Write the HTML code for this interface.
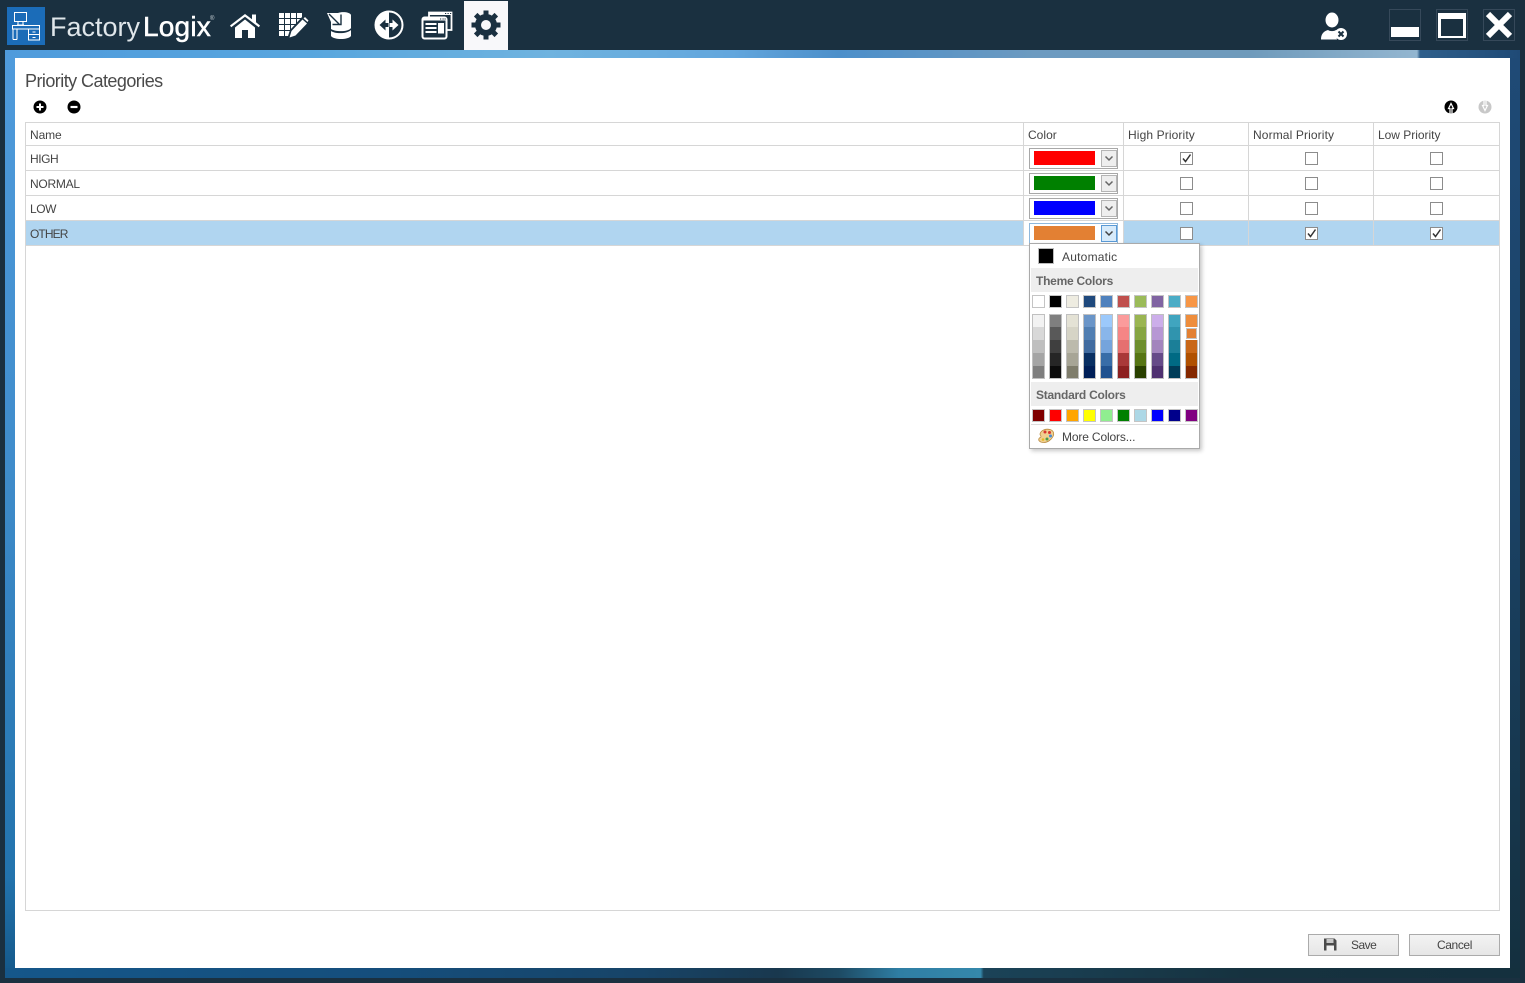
<!DOCTYPE html>
<html>
<head>
<meta charset="utf-8">
<title>Priority Categories</title>
<style>
html,body{margin:0;padding:0;background:#1a3040}
body{width:1525px;height:983px;position:relative;overflow:hidden;font-family:"Liberation Sans",sans-serif;color:#444}
div,span,svg{position:absolute}
.t{font-size:12px;line-height:16px;white-space:nowrap;letter-spacing:-.1px}
.u{letter-spacing:-.45px}
.h{letter-spacing:.12px}
.line{background:#d6d6d6}
.combo{left:1029px;width:87px;height:19px;border:1px solid #a8a8a8;background:#fff}
.sw{left:4px;top:2px;width:61px;height:14px}
.arr{left:71px;top:1px;width:14px;height:15px;border:1px solid #b5b5b5;background:#eee}
.cb{width:11px;height:11px;border:1px solid #8c8c8c;background:#fff}
.btn{height:20px;border:1px solid #ababab;background:linear-gradient(#f3f3f3,#e6e6e6)}
</style>
</head>
<body>
<!-- header -->
<div style="left:0;top:0;width:1525px;height:50px;background:#1a3040"></div>

<!-- frame -->
<div style="left:5px;top:50px;width:1515px;height:8px;background:linear-gradient(90deg,#4f9bdc 0%,#58a6de 20%,#6fb3df 36%,#62a6dd 48%,#4c8fca 55%,#6c9ac0 68%,#6e9abb 82%,#93b6d0 93.2%,#2f5f8b 93.4%,#1f4a76 100%)"></div>
<div style="left:5px;top:58px;width:10px;height:910px;background:linear-gradient(#4f9bdc 0%,#3f8ccb 45%,#2273ad 90%,#155a8c 100%)"></div>
<div style="left:1510px;top:58px;width:10px;height:910px;background:linear-gradient(#1f4a76,#1a4163 50%,#14303f)"></div>
<div style="left:5px;top:968px;width:1515px;height:10px;background:linear-gradient(90deg,#15578a 0%,#154e7c 25%,#174468 42%,#19384e 51%,#1d4a63 55%,#2f7ea4 59%,#3588ab 64.4%,#1b4358 64.6%,#16323f 82%,#14303e 100%)"></div>

<!-- content -->
<div style="left:15px;top:58px;width:1495px;height:910px;background:#fff"></div>

<!-- logo -->
<svg style="left:7px;top:7px" width="38" height="38" viewBox="0 0 38 38">
<rect width="38" height="38" fill="#1b6cb8"/>
<g fill="none" stroke="#fff" stroke-width="1">
<rect x="7.500" y="5.500" width="12" height="9"/>
<path d="M11 14.500v3.500M16 14.500v3.500M10 18h7"/>
<rect x="5.500" y="18.500" width="27" height="3.500"/>
<path d="M6 22v10.500M10 22v10.500M6 32.500h4"/>
<rect x="21.500" y="22" width="11" height="11"/>
<path d="M21.500 27.500h11M25.500 25h3M25.500 30.500h3"/>
</g>
</svg>
<div style="left:50px;top:10px;font-size:27px;line-height:34px;color:#dfe6ea;white-space:nowrap;font-weight:400">Factory</div>
<div style="left:143px;top:10px;font-size:28px;line-height:34px;color:#fff;white-space:nowrap;letter-spacing:.2px;font-weight:400;-webkit-text-stroke:.5px #fff">Logix</div>
<div style="left:210px;top:15px;font-size:6px;line-height:8px;color:#cdd5da">®</div>

<!-- home -->
<svg style="left:228px;top:10px" width="34" height="30" viewBox="0 0 34 30">
<path fill="#fff" d="M2 15.500 17 4l7 5.300V4.500h4v7.800l4 3.200-1.200 1.700L17 6.800 3.200 17.200z"/>
<path fill="#fff" d="M7 17.500 17 9.500l10 8V28h-7v-8h-6v8H7z"/>
</svg>
<!-- grid + pencil -->
<svg style="left:276px;top:10px" width="34" height="30" viewBox="0 0 34 30">
<g fill="#fff">
<rect x="3" y="3" width="5" height="5"/><rect x="9" y="3" width="5" height="5"/><rect x="15" y="3" width="5" height="5"/><rect x="21" y="3" width="5" height="5"/>
<rect x="3" y="9" width="5" height="5"/><rect x="9" y="9" width="5" height="5"/><rect x="15" y="9" width="5" height="5"/><rect x="21" y="9" width="5" height="5"/>
<rect x="3" y="15" width="5" height="5"/><rect x="9" y="15" width="5" height="5"/><rect x="15" y="15" width="5" height="5"/>
<rect x="3" y="21" width="5" height="5"/><rect x="9" y="21" width="5" height="5"/>
</g>
<path fill="#1a3040" d="M11 29 14 20 26 7 33 13 20 27z"/>
<path fill="#fff" d="M13.500 27.500 15.500 21 26.500 9.500 31 13.500 19.500 25.500zM27.500 8.500 29 7 32.500 10.500 31.500 12z"/>
</svg>
<!-- database arrow -->
<svg style="left:325px;top:9px" width="30" height="32" viewBox="0 0 30 32">
<path fill="#fff" d="M2 4H13C17 2.500 25 3 26 6V19C24 23 10 23 6 20V13z"/>
<path fill="#fff" d="M6 22C10 25 22 25 26 21V27C23 31 9 31 6 27z"/>
<path stroke="#1a3040" stroke-width="1.400" fill="none" d="M4 5 14 15M16 5.500V15.500H7.500"/>
</svg>
<!-- arrows circle -->
<svg style="left:373px;top:9px" width="32" height="32" viewBox="0 0 32 32">
<circle cx="16" cy="16" r="13.500" fill="#1a3040" stroke="#fff" stroke-width="2"/>
<path fill="#fff" d="M16 2A14 14 0 0 0 16 30z"/>
<path fill="#1a3040" d="M6.500 16 12.500 10.500v3.500h3v4h-3v3.500z"/>
<path fill="#fff" d="M25.500 16 19.500 10.500v3.500h-3v4h3v3.500z"/>
</svg>
<!-- windows -->
<svg style="left:420px;top:9px" width="34" height="32" viewBox="0 0 34 32">
<path fill="none" stroke="#fff" stroke-width="1.800" d="M9 8V3.500h22.500V21H27"/>
<path fill="#fff" d="M9 3h23v3H9z"/>
<path fill="#1a3040" d="M25 4h1.200v1H25zM27.500 4h1.200v1h-1.200zM30 4h1.200v1H30z"/>
<rect x="2.500" y="8.500" width="24" height="21" rx="2" fill="#1a3040" stroke="#fff" stroke-width="2"/>
<path fill="#fff" d="M2.500 8.500h24v3h-24z"/>
<path fill="#1a3040" d="M20 9.500h1.200v1H20zM22.500 9.500h1.200v1h-1.200zM24.500 9.500h1.200v1h-1.200z"/>
<path fill="#fff" d="M5.500 14h11v2h-11zM5.500 18h11v2h-11zM5.500 22h11v2h-11zM18 14h6v10.500h-6z"/>
</svg>
<!-- gear tab -->
<div style="left:464px;top:1px;width:44px;height:49px;background:#f8f8fa"></div>
<svg style="left:470px;top:9px" width="32" height="32" viewBox="0 0 32 32">
<circle cx="16" cy="16" r="8" fill="none" stroke="#1a3040" stroke-width="6"/>
<g stroke="#1a3040" stroke-width="5">
<path d="M16 1.500v6M16 24.500v6M1.500 16h6M24.500 16h6M5.700 5.700l4.300 4.300M22 22l4.300 4.300M5.700 26.300 10 22M22 10l4.300-4.300"/>
</g>
</svg>

<!-- user icon -->
<svg style="left:1318px;top:10px" width="32" height="32" viewBox="0 0 32 32">
<ellipse cx="14" cy="10" rx="6.500" ry="7.500" fill="#fff"/>
<path fill="#fff" d="M3 29.500c0-5 2-8 7-9.500 2 1.500 6 1.500 8 0 2 .5 3 1.200 4 2-3 2-4 5-3 7.500z"/>
<circle cx="23" cy="24" r="6" fill="#fff"/>
<path stroke="#1a3040" stroke-width="2" d="M20.500 21.500l5 5M25.500 21.500l-5 5"/>
</svg>
<!-- window buttons -->
<div style="left:1389px;top:9px;width:30px;height:30px;border:1px solid #36495a"></div>
<div style="left:1391px;top:27px;width:28px;height:10px;background:#fff"></div>
<div style="left:1436px;top:9px;width:30px;height:30px;border:1px solid #36495a"></div>
<div style="left:1438px;top:13px;width:22px;height:17px;border:3px solid #fff;border-top-width:6px;border-bottom-width:2px"></div>
<div style="left:1483px;top:9px;width:30px;height:30px;border:1px solid #36495a"></div>
<svg style="left:1484px;top:10px" width="30" height="30" viewBox="0 0 30 30"><path stroke="#fff" stroke-width="6" d="M4 4l22 22M26 4 4 26"/></svg>

<!-- title -->
<div style="left:25px;top:70px;font-size:18px;line-height:22px;color:#4a4a4a;white-space:nowrap;letter-spacing:-.55px">Priority Categories</div>

<!-- toolbar icons -->
<svg style="left:32px;top:99px" width="16" height="16" viewBox="0 0 16 16"><circle cx="8" cy="8" r="6.500"/><path stroke="#fff" stroke-width="2" d="M4.500 8h7M8 4.500v7"/></svg>
<svg style="left:66px;top:99px" width="16" height="16" viewBox="0 0 16 16"><circle cx="8" cy="8" r="6.500"/><path stroke="#fff" stroke-width="2.200" d="M4.500 8h7"/></svg>
<svg style="left:1443px;top:99px" width="16" height="16" viewBox="0 0 16 16"><circle cx="8" cy="8" r="6.500"/><path stroke="#fff" stroke-width="1.200" fill="none" d="M7 14.500V9.500H5.500L8 4.500l2.500 5H9v5"/></svg>
<svg style="left:1477px;top:99px" width="16" height="16" viewBox="0 0 16 16"><circle cx="8" cy="8" r="6.500" fill="#c8c8c8"/><path stroke="#fff" stroke-width="1.200" fill="none" d="M7 1.500V6.500H5.500L8 11.500l2.500-5H9v-5"/></svg>

<!-- table -->
<div style="left:26px;top:221px;width:998px;height:25px;background:#b0d5f0"></div>
<div style="left:1124px;top:221px;width:375px;height:25px;background:#b0d5f0"></div>
<div class="line" style="left:25px;top:122px;width:1475px;height:1px"></div>
<div class="line" style="left:25px;top:145px;width:1475px;height:1px"></div>
<div class="line" style="left:25px;top:170px;width:1475px;height:1px"></div>
<div class="line" style="left:25px;top:195px;width:1475px;height:1px"></div>
<div class="line" style="left:25px;top:220px;width:1475px;height:1px"></div>
<div class="line" style="left:25px;top:245px;width:1475px;height:1px"></div>
<div class="line" style="left:25px;top:910px;width:1475px;height:1px"></div>
<div class="line" style="left:25px;top:122px;width:1px;height:789px"></div>
<div class="line" style="left:1499px;top:122px;width:1px;height:789px"></div>
<div class="line" style="left:1023px;top:122px;width:1px;height:124px"></div>
<div class="line" style="left:1123px;top:122px;width:1px;height:124px"></div>
<div class="line" style="left:1248px;top:122px;width:1px;height:124px"></div>
<div class="line" style="left:1373px;top:122px;width:1px;height:124px"></div>

<div class="t" style="left:30px;top:127px">Name</div>
<div class="t" style="left:1028px;top:127px;letter-spacing:.02px">Color</div>
<div class="t h" style="left:1128px;top:127px">High Priority</div>
<div class="t h" style="left:1253px;top:127px">Normal Priority</div>
<div class="t h" style="left:1378px;top:127px;letter-spacing:-.02px">Low Priority</div>

<div class="t u" style="left:30px;top:151px">HIGH</div>
<div class="t u" style="left:30px;top:176px;letter-spacing:-.25px">NORMAL</div>
<div class="t u" style="left:30px;top:201px">LOW</div>
<div class="t u" style="left:30px;top:226px;letter-spacing:-.9px">OTHER</div>

<!-- combos -->
<div class="combo" style="top:148px"><div class="sw" style="background:#f00"></div><div class="arr"><svg style="left:2px;top:4px" width="10" height="7"><path d="M1.500 1.500 5 5l3.500-3.500" fill="none" stroke="#666" stroke-width="1.500"/></svg></div></div>
<div class="combo" style="top:173px"><div class="sw" style="background:#008000"></div><div class="arr"><svg style="left:2px;top:4px" width="10" height="7"><path d="M1.500 1.500 5 5l3.500-3.500" fill="none" stroke="#666" stroke-width="1.500"/></svg></div></div>
<div class="combo" style="top:198px"><div class="sw" style="background:#00f"></div><div class="arr"><svg style="left:2px;top:4px" width="10" height="7"><path d="M1.500 1.500 5 5l3.500-3.500" fill="none" stroke="#666" stroke-width="1.500"/></svg></div></div>
<div class="combo" style="top:223px;border-color:#8fb8dc"><div class="sw" style="background:#e38033"></div><div class="arr" style="background:#d6eafa;border-color:#5a9ad6"><svg style="left:2px;top:4px" width="10" height="7"><path d="M1.500 1.500 5 5l3.500-3.500" fill="none" stroke="#444" stroke-width="1.500"/></svg></div></div>

<!-- checkboxes -->
<div class="cb" style="left:1180px;top:152px"><svg style="left:0;top:0" width="11" height="11"><path d="M2 5.500 4.500 8.500 9.500 1.500" fill="none" stroke="#333" stroke-width="1.500"/></svg></div>
<div class="cb" style="left:1305px;top:152px"></div>
<div class="cb" style="left:1430px;top:152px"></div>
<div class="cb" style="left:1180px;top:177px"></div>
<div class="cb" style="left:1305px;top:177px"></div>
<div class="cb" style="left:1430px;top:177px"></div>
<div class="cb" style="left:1180px;top:202px"></div>
<div class="cb" style="left:1305px;top:202px"></div>
<div class="cb" style="left:1430px;top:202px"></div>
<div class="cb" style="left:1180px;top:227px"></div>
<div class="cb" style="left:1305px;top:227px"><svg style="left:0;top:0" width="11" height="11"><path d="M2 5.500 4.500 8.500 9.500 1.500" fill="none" stroke="#333" stroke-width="1.500"/></svg></div>
<div class="cb" style="left:1430px;top:227px"><svg style="left:0;top:0" width="11" height="11"><path d="M2 5.500 4.500 8.500 9.500 1.500" fill="none" stroke="#333" stroke-width="1.500"/></svg></div>

<!-- popup -->
<div style="left:1029px;top:243px;width:169px;height:204px;border:1px solid #aaa;background:#fff;box-shadow:2px 2px 4px rgba(0,0,0,.22)"></div>
<div style="left:1038px;top:248px;width:14px;height:14px;background:#000;border:1px solid #bbb"></div>
<div class="t" style="left:1062px;top:249px;letter-spacing:.22px">Automatic</div>
<div style="left:1031px;top:268px;width:167px;height:24px;background:#eee"></div>
<div class="t" style="left:1036px;top:273px;font-weight:bold;color:#666;letter-spacing:-.25px">Theme Colors</div>
<div style="left:1031px;top:382px;width:167px;height:24px;background:#eee"></div>
<div class="t" style="left:1036px;top:387px;font-weight:bold;color:#666;letter-spacing:-.25px">Standard Colors</div>
<div style="left:1031px;top:424px;width:167px;height:1px;background:#ddd"></div>
<div class="t" style="left:1062px;top:429px;letter-spacing:-.15px">More Colors...</div>

<svg style="left:1032px;top:295px" width="166" height="128" viewBox="0 0 166 128" shape-rendering="crispEdges">
<!-- theme row -->
<g stroke="#c4c4c4">
<rect x=".5" y=".5" width="12" height="12" fill="#fff"/>
<rect x="17.500" y=".5" width="12" height="12" fill="#000"/>
<rect x="34.500" y=".5" width="12" height="12" fill="#eeece1"/>
<rect x="51.500" y=".5" width="12" height="12" fill="#1f497d"/>
<rect x="68.500" y=".5" width="12" height="12" fill="#4f81bd"/>
<rect x="85.500" y=".5" width="12" height="12" fill="#c0504d"/>
<rect x="102.500" y=".5" width="12" height="12" fill="#9bbb59"/>
<rect x="119.500" y=".5" width="12" height="12" fill="#8064a2"/>
<rect x="136.500" y=".5" width="12" height="12" fill="#4bacc6"/>
<rect x="153.500" y=".5" width="12" height="12" fill="#f79646"/>
</g>
<!-- shades -->
<g>
<path fill="#c0c0c0" d="M0 19h13v65H0zM17 19h13v65H17zM34 19h13v65H34zM51 19h13v65H51zM68 19h13v65H68zM85 19h13v65H85zM102 19h13v65H102zM119 19h13v65H119zM136 19h13v65H136zM153 19h13v65H153z"/>
<rect x="1" y="20" width="11" height="12" fill="#f2f2f2"/><rect x="1" y="32" width="11" height="13" fill="#d8d8d8"/><rect x="1" y="45" width="11" height="13" fill="#bfbfbf"/><rect x="1" y="58" width="11" height="13" fill="#a5a5a5"/><rect x="1" y="71" width="11" height="12" fill="#7f7f7f"/>
<rect x="18" y="20" width="11" height="12" fill="#7f7f7f"/><rect x="18" y="32" width="11" height="13" fill="#595959"/><rect x="18" y="45" width="11" height="13" fill="#3f3f3f"/><rect x="18" y="58" width="11" height="13" fill="#262626"/><rect x="18" y="71" width="11" height="12" fill="#0c0c0c"/>
<rect x="35" y="20" width="11" height="12" fill="#e4e2d5"/><rect x="35" y="32" width="11" height="13" fill="#d6d4c6"/><rect x="35" y="45" width="11" height="13" fill="#bcbaac"/><rect x="35" y="58" width="11" height="13" fill="#a7a596"/><rect x="35" y="71" width="11" height="12" fill="#7f7d6c"/>
<rect x="52" y="20" width="11" height="12" fill="#6a95c8"/><rect x="52" y="32" width="11" height="13" fill="#507eb2"/><rect x="52" y="45" width="11" height="13" fill="#406ba0"/><rect x="52" y="58" width="11" height="13" fill="#082f63"/><rect x="52" y="71" width="11" height="12" fill="#001f58"/>
<rect x="69" y="20" width="11" height="12" fill="#9cc9fb"/><rect x="69" y="32" width="11" height="13" fill="#89b6ea"/><rect x="69" y="45" width="11" height="13" fill="#75a4dc"/><rect x="69" y="58" width="11" height="13" fill="#386da8"/><rect x="69" y="71" width="11" height="12" fill="#205290"/>
<rect x="86" y="20" width="11" height="12" fill="#fb9b9b"/><rect x="86" y="32" width="11" height="13" fill="#f58585"/><rect x="86" y="45" width="11" height="13" fill="#e57070"/><rect x="86" y="58" width="11" height="13" fill="#a93838"/><rect x="86" y="71" width="11" height="12" fill="#8c2020"/>
<rect x="103" y="20" width="11" height="12" fill="#9ab552"/><rect x="103" y="32" width="11" height="13" fill="#86a542"/><rect x="103" y="45" width="11" height="13" fill="#6e8f2e"/><rect x="103" y="58" width="11" height="13" fill="#567514"/><rect x="103" y="71" width="11" height="12" fill="#294000"/>
<rect x="120" y="20" width="11" height="12" fill="#ccaeea"/><rect x="120" y="32" width="11" height="13" fill="#b797d4"/><rect x="120" y="45" width="11" height="13" fill="#a385bd"/><rect x="120" y="58" width="11" height="13" fill="#664b88"/><rect x="120" y="71" width="11" height="12" fill="#4f3170"/>
<rect x="137" y="20" width="11" height="12" fill="#40a5bf"/><rect x="137" y="32" width="11" height="13" fill="#3094ae"/><rect x="137" y="45" width="11" height="13" fill="#1b7f98"/><rect x="137" y="58" width="11" height="13" fill="#006a84"/><rect x="137" y="71" width="11" height="12" fill="#003c58"/>
<rect x="154" y="20" width="11" height="12" fill="#ee8d3c"/><rect x="154" y="45" width="11" height="13" fill="#c96718"/><rect x="154" y="58" width="11" height="13" fill="#b05000"/><rect x="154" y="71" width="11" height="12" fill="#842800"/>
<rect x="153" y="32" width="13" height="13" fill="#fff"/><rect x="154" y="33" width="11" height="11" fill="#c4c4c4"/><rect x="155" y="34" width="9" height="9" fill="#e38033"/>
</g>
<!-- standard row -->
<g stroke="#c4c4c4">
<rect x=".5" y="114.500" width="12" height="12" fill="#800000"/>
<rect x="17.500" y="114.500" width="12" height="12" fill="#f00"/>
<rect x="34.500" y="114.500" width="12" height="12" fill="#ffa500"/>
<rect x="51.500" y="114.500" width="12" height="12" fill="#ff0"/>
<rect x="68.500" y="114.500" width="12" height="12" fill="#90ee90"/>
<rect x="85.500" y="114.500" width="12" height="12" fill="#008000"/>
<rect x="102.500" y="114.500" width="12" height="12" fill="#add8e6"/>
<rect x="119.500" y="114.500" width="12" height="12" fill="#00f"/>
<rect x="136.500" y="114.500" width="12" height="12" fill="#00008b"/>
<rect x="153.500" y="114.500" width="12" height="12" fill="#800080"/>
</g>
</svg>
<!-- palette -->
<svg style="left:1037px;top:428px" width="18" height="16" viewBox="0 0 18 16">
<path fill="#f0cf90" stroke="#b98a3e" stroke-width=".8" d="M3 6C4 2 9 .5 13 1.500c3.500 1 4.500 4 3 7-1.500 3-5 6-9.500 6C3 14.500 1 12.500 2 10.500 2.800 9 4 10 4 8.500 4 7.500 2.800 7 3 6z"/>
<circle cx="8" cy="4" r="1.500" fill="#d8352e"/><circle cx="12.500" cy="4.500" r="1.500" fill="#d8352e"/><circle cx="13.500" cy="8" r="1.500" fill="#4a8bd0"/><circle cx="10" cy="11" r="1.500" fill="#4aa04a"/><circle cx="6" cy="11.500" r="1.300" fill="#e8b820"/>
</svg>

<!-- buttons -->
<div class="btn" style="left:1308px;top:934px;width:89px"></div>
<svg style="left:1324px;top:938px" width="13" height="13" viewBox="0 0 13 13"><path fill="#4a4a4a" d="M0 .5h10.500L12.500 2.500V12.500H0z"/><rect x="2.500" y="1" width="7" height="4" fill="#c8c8c8"/><rect x="2.500" y="7.500" width="7.500" height="5" fill="#f0f0f0"/></svg>
<div class="t" style="left:1351px;top:937px;letter-spacing:-.5px">Save</div>
<div class="btn" style="left:1409px;top:934px;width:89px"></div>
<div class="t" style="left:1437px;top:937px;letter-spacing:-.4px">Cancel</div>
</body>
</html>
